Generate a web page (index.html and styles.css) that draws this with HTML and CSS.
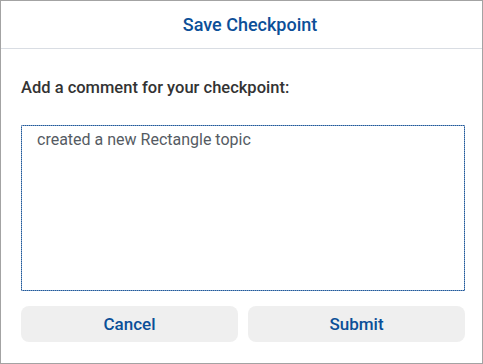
FILE: index.html
```html
<!DOCTYPE html>
<html lang="en">
<head>
  <meta charset="UTF-8">
  <title>Save Checkpoint</title>
  <link rel="stylesheet" href="styles.css">
</head>
<body>
  <section class="dialog">
    <header class="dialog-header">
      <h1>Save Checkpoint</h1>
    </header>
    <form class="dialog-body" action="">
      <label for="comment">Add a comment for your checkpoint:</label>
      <textarea id="comment" name="comment">created a new Rectangle topic</textarea>
      <div class="actions">
        <button type="button">Cancel</button>
        <button type="submit">Submit</button>
      </div>
    </form>
  </section>
</body>
</html>
```

FILE: styles.css
```css
body {
  margin: 0;
  font-family: Roboto, "Liberation Sans", Arial, sans-serif;
}
.dialog {
  width: 483px;
  height: 364px;
  box-sizing: border-box;
  border: 1px solid #a3a3a3;
  background: #fff;
}
.dialog-header {
  height: 47px;
  padding-left: 17px;
  border-bottom: 1px solid #d9dde3;
  display: flex;
  align-items: center;
  justify-content: center;
}
h1 {
  margin: 0;
  font-size: 18px;
  font-weight: 500;
  color: #0b4f98;
}
.dialog-body {
  display: flex;
  flex-direction: column;
  padding: 29px 17px 0 20px;
}
label {
  font-size: 16.5px;
  line-height: 20px;
  font-weight: 500;
  color: #333;
}
textarea {
  margin-top: 27px;
  height: 166px;
  box-sizing: border-box;
  resize: none;
  border: 1px solid #1d5a9c;
  outline: 1px dotted #7f9cc2;
  outline-offset: -1px;
  padding: 5px 15px;
  font-family: inherit;
  font-size: 16px;
  line-height: 18px;
  color: #555b63;
}
.actions {
  margin-top: 15px;
  display: grid;
  grid-template-columns: 1fr 1fr;
  grid-gap: 10px;
}
.actions button {
  height: 36px;
  border: none;
  border-radius: 8px;
  background: #efefef;
  font-family: inherit;
  font-size: 17px;
  font-weight: 500;
  color: #0b4f98;
  cursor: pointer;
}
```
